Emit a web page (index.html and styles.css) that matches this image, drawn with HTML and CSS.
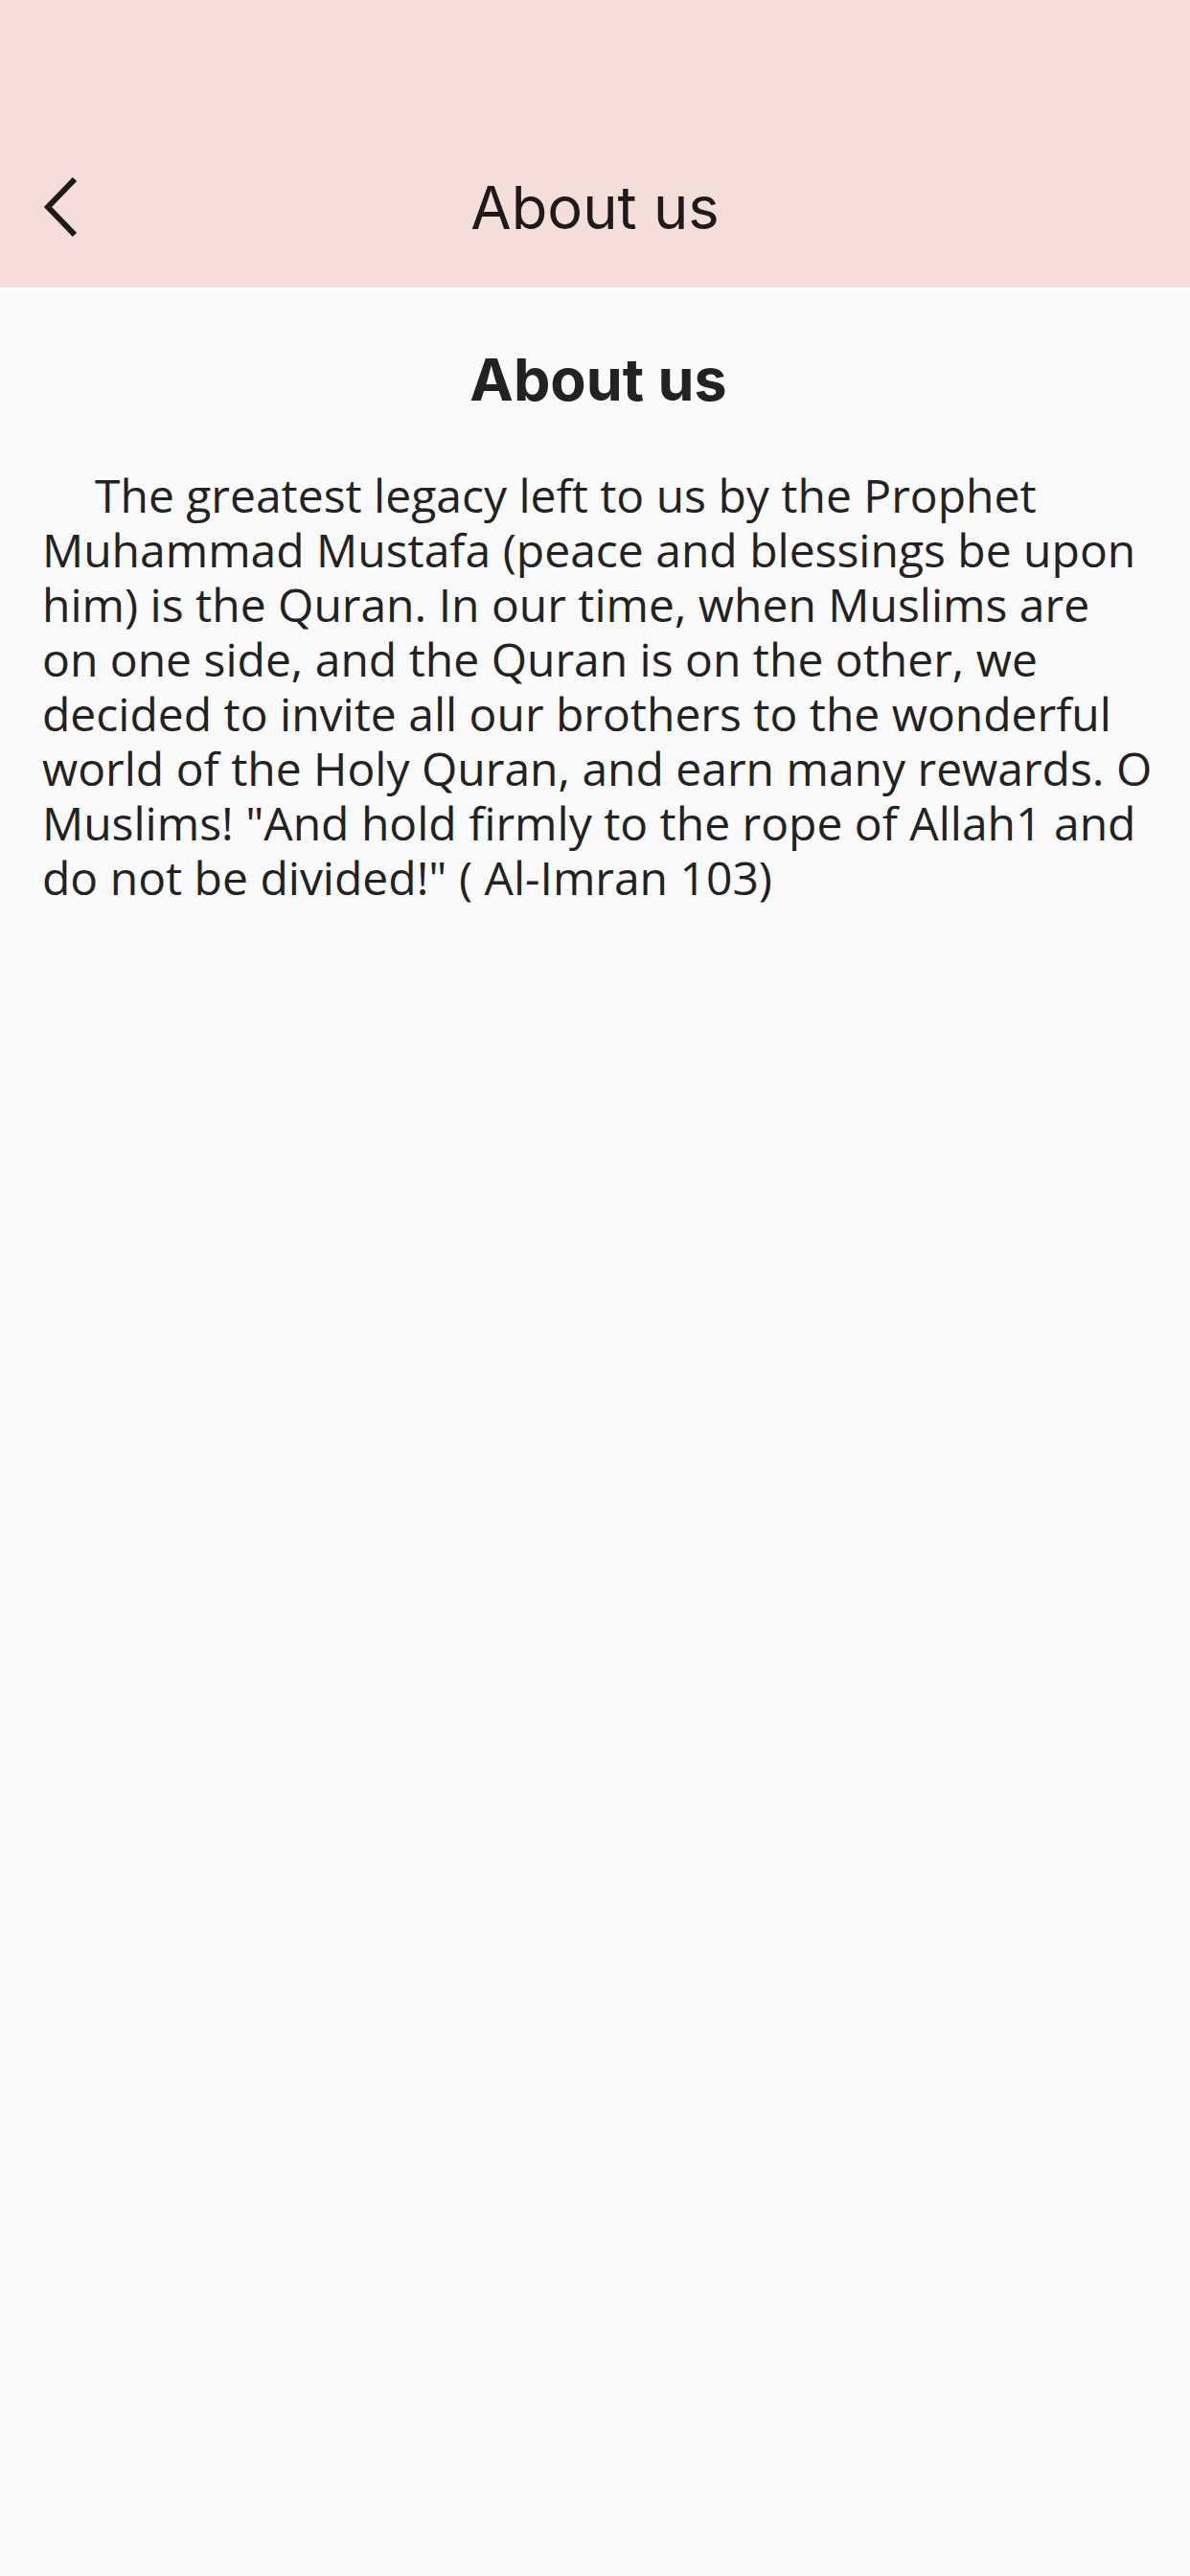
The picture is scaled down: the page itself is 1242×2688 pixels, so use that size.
FILE: index.html
```html
<!DOCTYPE html>
<html lang="en">
<head>
<meta charset="utf-8">
<title>About us</title>
<link rel="stylesheet" href="styles.css">
</head>
<body>
<header class="appbar">
  <div class="toolbar">
    <button class="back" aria-label="Back">
      <svg width="44" height="66" viewBox="0 0 44 66"><path d="M38 4 L10 33 L38 62" fill="none" stroke="#1e1a1a" stroke-width="6" stroke-linecap="butt" stroke-linejoin="miter"/></svg>
    </button>
    <h1 class="bar-title">About us</h1>
  </div>
</header>
<main class="content">
  <h2 class="heading">About us</h2>
  <p class="text">The greatest legacy left to us by the Prophet Muhammad Mustafa (peace and blessings be upon him) is the Quran. In our time, when Muslims are on one side, and the Quran is on the other, we decided to invite all our brothers to the wonderful world of the Holy Quran, and earn many rewards. O Muslims! "And hold firmly to the rope of Allah1 and do not be divided!" ( Al-Imran 103)</p>
</main>
</body>
</html>
```
FILE: styles.css
```css
html, body {
  margin: 0;
  padding: 0;
}
body {
  width: 1242px;
  min-height: 2688px;
  background: #fafafa;
  font-family: Inter, "Noto Sans", sans-serif;
  color: #222222;
}
.appbar {
  background: #f5ddd9;
  padding-top: 132px;
}
.toolbar {
  height: 168px;
  display: flex;
  align-items: center;
  justify-content: center;
  position: relative;
}
.back {
  position: absolute;
  left: 40px;
  top: 50%;
  transform: translateY(-50%);
  background: none;
  border: 0;
  padding: 0;
  display: flex;
}
.bar-title {
  margin: 0;
  font-size: 61.5px;
  font-weight: 400;
  color: #1e1a1a;
}
.content {
  padding: 0 37px 0 44px;
}
.heading {
  margin: 0;
  padding-top: 56px;
  text-align: center;
  font-size: 61px;
  font-weight: 700;
  line-height: 80px;
  color: #222222;
}
.text {
  margin: 52px 0 0;
  font-family: "Open Sans", Inter, sans-serif;
  font-size: 48px;
  line-height: 57px;
  text-indent: 55px;
  color: #222222;
}
```
